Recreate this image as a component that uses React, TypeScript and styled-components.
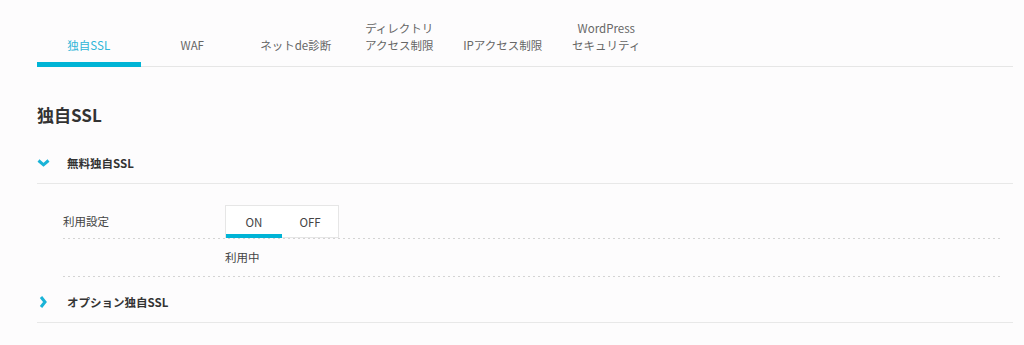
import React, { useState } from "react";
import styled, { createGlobalStyle } from "styled-components";

const GlobalStyle = createGlobalStyle`
  html, body {
    margin: 0;
    padding: 0;
    background: #fdfcfd;
  }
  body {
    font-family: "Noto Sans CJK JP", "Noto Sans", "Liberation Sans", sans-serif;
    color: #333;
  }
`;

const Page = styled.div`
  padding: 0 11px 0 37px;
`;

const TabBar = styled.div`
  display: flex;
  height: 67px;
  border-bottom: 1px solid #e6e6e6;
  box-sizing: border-box;
`;

const Tab = styled.div<{ $active?: boolean }>`
  width: 103.5px;
  height: 67px;
  box-sizing: border-box;
  display: flex;
  flex-direction: column;
  justify-content: flex-end;
  align-items: center;
  padding-bottom: 8px;
  border-bottom: 5px solid ${(p) => (p.$active ? "#00b4d6" : "transparent")};
  font-size: 11.5px;
  line-height: 17px;
  text-align: center;
  color: ${(p) => (p.$active ? "#2fb6d8" : "#666")};
  cursor: pointer;
`;

const Heading = styled.h1`
  margin: 36px 0 16px;
  font-size: 17px;
  line-height: 24px;
  font-weight: 700;
  color: #333;
`;

const SectionHeader = styled.div`
  display: flex;
  align-items: center;
  height: 40px;
  border-bottom: 1px solid #e8e8e8;
  cursor: pointer;
`;

const Chevron = styled.span`
  width: 30px;
  display: flex;
  align-items: center;
`;

const SectionTitle = styled.span`
  font-size: 11.5px;
  font-weight: 700;
  color: #333;
`;

const SectionBody = styled.div`
  padding: 21px 12px 5px 26px;
`;

const Row = styled.div<{ $pad: number }>`
  display: flex;
  align-items: center;
  padding: ${(p) => p.$pad}px 0;
  font-size: 11.5px;
  line-height: 17px;
  color: #444;
  background: linear-gradient(to right, #d4d4d4 2px, transparent 2px) left
    bottom / 5px 1px repeat-x;
  padding-bottom: ${(p) => p.$pad + 1}px;
`;

const Label = styled.div`
  width: 162px;
  flex: none;
`;

const Toggle = styled.div`
  display: flex;
  border: 1px solid #e6e6e6;
  background: #fff;
  height: 33px;
  box-sizing: border-box;
`;

const ToggleOption = styled.button<{ $active?: boolean }>`
  width: 56px;
  border: none;
  background: none;
  padding: 0;
  font-family: inherit;
  font-size: 11.5px;
  color: #444;
  border-bottom: 4px solid ${(p) => (p.$active ? "#00b4d6" : "transparent")};
  margin-bottom: -1px;
  padding-top: 3px;
  cursor: pointer;
`;

const DownIcon = () => (
  <svg width="13" height="8" viewBox="0 0 13 8">
    <polyline points="1.5,1.5 6.5,5.8 11.5,1.5" fill="none" stroke="#1ab3d7" strokeWidth="3" />
  </svg>
);

const RightIcon = () => (
  <svg width="12" height="12" viewBox="0 0 12 12">
    <polyline points="4,1 8,6 4,11" fill="none" stroke="#1ab3d7" strokeWidth="3" />
  </svg>
);

const tabs: React.ReactNode[] = [
  "独自SSL",
  "WAF",
  "ネットde診断",
  <>ディレクトリ<br />アクセス制限</>,
  "IPアクセス制限",
  <>WordPress<br />セキュリティ</>,
];

export default function App() {
  const [active, setActive] = useState(0);
  const [on, setOn] = useState(true);
  return (
    <Page>
      <GlobalStyle />
      <TabBar>
        {tabs.map((t, i) => (
          <Tab key={i} $active={i === active} onClick={() => setActive(i)}>
            <div>{t}</div>
          </Tab>
        ))}
      </TabBar>
      <Heading>独自SSL</Heading>
      <SectionHeader>
        <Chevron>
          <DownIcon />
        </Chevron>
        <SectionTitle>無料独自SSL</SectionTitle>
      </SectionHeader>
      <SectionBody>
        <Row $pad={0}>
          <Label>利用設定</Label>
          <Toggle>
            <ToggleOption $active={on} onClick={() => setOn(true)}>ON</ToggleOption>
            <ToggleOption $active={!on} onClick={() => setOn(false)}>OFF</ToggleOption>
          </Toggle>
        </Row>
        <Row $pad={10}>
          <Label />
          <div>{on ? "利用中" : "停止中"}</div>
        </Row>
      </SectionBody>
      <SectionHeader>
        <Chevron>
          <RightIcon />
        </Chevron>
        <SectionTitle>オプション独自SSL</SectionTitle>
      </SectionHeader>
    </Page>
  );
}
